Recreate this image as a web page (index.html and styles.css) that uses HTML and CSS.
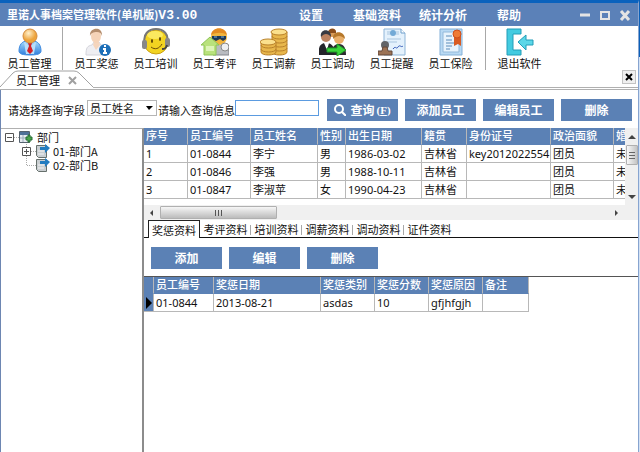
FILE: index.html
```html
<!DOCTYPE html>
<html lang="zh-CN">
<head>
<meta charset="utf-8">
<title>里诺人事档案管理软件</title>
<link rel="stylesheet" href="styles.css">
</head>
<body>
<div class="window">
  <header class="titlebar">
    <h1 class="title">里诺人事档案管理软件(单机版)<span class="version">V3.00</span></h1>
    <nav class="menu">
      <a href="#">设置</a>
      <a href="#">基础资料</a>
      <a href="#">统计分析</a>
      <a href="#">帮助</a>
    </nav>
    <div class="window-controls">
      <button type="button" aria-label="最小化"><svg width="12" height="12" viewBox="0 0 12 12"><path d="M1 6h10" stroke="#e4e4e4" stroke-width="3"/></svg></button>
      <button type="button" aria-label="最大化"><svg width="12" height="12" viewBox="0 0 12 12"><path d="M2 3h8v7H2z" fill="none" stroke="#e4e4e4" stroke-width="2"/></svg></button>
      <button type="button" aria-label="关闭"><svg width="12" height="12" viewBox="0 0 12 12"><path d="M2 2l8 9M10 2l-8 9" stroke="#e4e4e4" stroke-width="3"/></svg></button>
    </div>
  </header>

  <div class="toolbar">
    <button type="button" class="tool">
      <svg width="28" height="28" viewBox="0 0 28 28">
        <defs>
          <radialGradient id="head" cx=".4" cy=".3"><stop offset="0" stop-color="#fff0cc"/><stop offset="1" stop-color="#eda43c"/></radialGradient>
          <linearGradient id="suit" x2="0" y2="1"><stop offset="0" stop-color="#a5dbfd"/><stop offset="1" stop-color="#2f7ddb"/></linearGradient>
        </defs>
        <path d="M3 23c0-6 3-10 8-10h6c5 0 8 4 8 10 0 3-4 4-11 4S3 26 3 23z" fill="url(#suit)" stroke="#3f8be0"/>
        <path d="M8 14l6 4 6-4-2 12h-8z" fill="#b8defa"/>
        <path d="M12 15h4l-1 3 2 5-3 3-3-3 2-5z" fill="#d3202a"/>
        <circle cx="14" cy="8" r="7" fill="url(#head)" stroke="#d48b3d"/>
      </svg>
      <span>员工管理</span>
    </button>
    <i class="divider"></i>
    <button type="button" class="tool">
      <svg width="28" height="28" viewBox="0 0 28 28">
        <path d="M3 27c0-7 1-9 6-10l2-3h5l2 3c4 1 6 3 6 10z" fill="#eeeef2" stroke="#d5d5dc"/>
        <path d="M10 17l3 5 4-5-1-3h-5z" fill="#f5d5bd"/>
        <ellipse cx="13" cy="8" rx="5" ry="7" fill="#f5d3b8"/>
        <path d="M7 8c-1-9 13-10 12 0-1-3-2-4-5-4-4 0-6 1-7 4z" fill="#b58e6e"/>
        <circle cx="22" cy="22" r="6" fill="#1d6fb8"/>
        <path d="M22 17v2M20 21h2v4M20 25h4" stroke="#fff" stroke-width="2" fill="none"/>
      </svg>
      <span>员工奖惩</span>
    </button>
    <button type="button" class="tool">
      <svg width="28" height="28" viewBox="0 0 28 28">
        <circle cx="14" cy="14" r="12" fill="#f2d321" stroke="#c9a013"/>
        <ellipse cx="13" cy="7" rx="8" ry="4" fill="#fbe95f"/>
        <path d="M3 16C0 6 7 1 14 1s14 5 11 15" fill="none" stroke="#777" stroke-width="2"/>
        <rect x="0" y="12" width="5" height="9" rx="2" fill="#888"/>
        <rect x="23" y="10" width="5" height="9" rx="2" fill="#888"/>
        <ellipse cx="10" cy="13" rx="1" ry="2" fill="#5b4307"/><ellipse cx="18" cy="11" rx="1" ry="2" fill="#5b4307"/>
        <path d="M9 19c4 3 8 2 11-3" fill="none" stroke="#6b4b08" stroke-width="1"/>
        <path d="M25 17c-1 4-3 4-5 4" fill="none" stroke="#444" stroke-width="2"/>
      </svg>
      <span>员工培训</span>
    </button>
    <button type="button" class="tool">
      <svg width="28" height="28" viewBox="0 0 28 28">
        <path d="M12 27c0-8 2-12 8-12s8 4 8 12z" fill="#b9bcc1" stroke="#85888e"/>
        <circle cx="18" cy="9" r="8" fill="#f2b53d"/>
        <path d="M10 7c1-9 15-9 16 0-4-3-11-3-16 0z" fill="#e58b21"/>
        <path d="M11 8h14v3l-3 2-3-2-4 2-4-2z" fill="#1d3858"/>
        <path d="M13 9h3M20 9h3" stroke="#7fb1d9"/>
        <circle cx="24" cy="19" r="4" fill="#eef0f2" stroke="#888"/>
        <path d="M0 17l9-8 9 8h-3v10H3V17z" fill="#b9e27c" stroke="#8fc457"/>
        <path d="M5 18h8v5H5z" fill="#ddf4b7"/>
      </svg>
      <span>员工考评</span>
    </button>
    <button type="button" class="tool">
      <svg width="28" height="28" viewBox="0 0 28 28">
        <g fill="#e8b74c" stroke="#b9812a">
          <path d="M12 4v20c0 4 15 4 15 0V4z"/>
          <path d="M12 20c0 4 15 4 15 0M12 16c0 4 15 4 15 0M12 12c0 4 15 4 15 0M12 8c0 4 15 4 15 0" fill="none"/>
          <ellipse cx="19" cy="4" rx="8" ry="3" fill="#fbe08d"/>
          <path d="M1 14v10c0 4 15 4 15 0V14z"/>
          <path d="M1 21c0 4 15 4 15 0M1 17c0 4 15 4 15 0" fill="none"/>
          <ellipse cx="8" cy="14" rx="8" ry="3" fill="#fbe08d"/>
        </g>
      </svg>
      <span>员工调薪</span>
    </button>
    <button type="button" class="tool">
      <svg width="28" height="28" viewBox="0 0 28 28">
        <circle cx="13" cy="5" r="4" fill="#d99a56"/><path d="M9 5c0-6 9-6 8 0z" fill="#8a4d1c"/>
        <circle cx="20" cy="11" r="5" fill="#e9af69"/><path d="M14 11c-1-9 12-9 12 0-4-4-8-4-12 0z" fill="#b6782b"/>
        <path d="M12 27c0-7 3-11 8-11s7 4 7 11z" fill="#2b2b31"/>
        <circle cx="7" cy="9" r="5" fill="#bc8260"/><path d="M2 9c-2-9 11-9 10 0-3-4-7-4-10 0z" fill="#383a42"/>
        <path d="M0 27c-1-8 1-12 7-12s9 4 8 12z" fill="#24242a"/>
        <path d="M5 15l3 7 2-7z" fill="#fff"/>
        <path d="M8 20h10v-4l9 6-9 6v-4H8z" fill="#3bd33b" stroke="#1d9b27"/>
      </svg>
      <span>员工调动</span>
    </button>
    <button type="button" class="tool">
      <svg width="28" height="28" viewBox="0 0 28 28">
        <path d="M6 1h17l4 4v22H6z" fill="#e4f1fc" stroke="#8fb5d8"/>
        <path d="M23 1v4h4" fill="#fff" stroke="#6f9fcb"/>
        <path d="M9 4h3M9 6h3M18 4h3M18 6h3M9 11h14M9 14h10" stroke="#a8c5df"/>
        <circle cx="15" cy="5" r="3" fill="#72a9d6"/>
        <path d="M15 21c3-4 3 1 5-2s3 1 5-1" fill="none" stroke="#3258b7"/>
        <circle cx="7" cy="17" r="4" fill="#626468"/>
        <path d="M5 19h4l1 4h4v4H0v-4h4z" fill="#9c7355" stroke="#63483a"/>
      </svg>
      <span>员工提醒</span>
    </button>
    <button type="button" class="tool">
      <svg width="28" height="28" viewBox="0 0 28 28">
        <path d="M3 1h22v26H3z" fill="#b8d9f3" stroke="#85b1d8"/>
        <path d="M6 4h16v20H6z" fill="#e7f3fc" stroke="#93b9da"/>
        <path d="M9 8h6M9 12h6M9 15h9M9 18h6M9 21h4" stroke="#5b8cba"/>
        <path d="M17 8h7v10l-3-2-4 2z" fill="#d85b22"/>
        <circle cx="20" cy="6" r="4" fill="#ef7b35" stroke="#ce4f1b"/>
      </svg>
      <span>员工保险</span>
    </button>
    <i class="divider wide"></i>
    <button type="button" class="tool">
      <svg width="28" height="28" viewBox="0 0 28 28">
        <path d="M1 1h14v5H7v16h8v5H1z" fill="#43cbe0" stroke="#239db8"/>
        <path d="M12 14l8-7v5h7v5h-7v5z" fill="#5bd7e8" stroke="#239db8"/>
      </svg>
      <span>退出软件</span>
    </button>
  </div>

  <div class="page-tabs">
    <div class="page-tab">
      <svg class="tab-shape" width="94" height="18" viewBox="0 0 94 18" aria-hidden="true"><path d="M0 17L13 3Q15 1 18 1H74Q77 1 79 3L93 17V18H0z" fill="#fff"/><path d="M0 17L13 3Q15 1 18 1H74Q77 1 79 3L93 17" fill="none" stroke="#a2a2a2"/></svg>
      <span>员工管理</span>
      <button type="button" class="tab-close" aria-label="关闭标签"><svg width="9" height="9" viewBox="0 0 9 9"><path d="M1 1l7 7M8 1l-7 7" stroke="#a0a0a0" stroke-width="2"/></svg></button>
    </div>
    <button type="button" class="page-close" aria-label="关闭页面"><svg width="8" height="8" viewBox="0 0 8 8"><path d="M1 1l6 6M7 1l-6 6" stroke="#000" stroke-width="2"/></svg></button>
  </div>

  <main class="page">
    <form class="search">
      <label for="field">请选择查询字段</label>
      <span class="select-box">
        <select id="field"><option>员工姓名</option></select>
        <svg width="8" height="5" viewBox="0 0 8 5" aria-hidden="true"><path d="M1 0h7L4 4z" fill="#000"/></svg>
      </span>
      <label for="query">请输入查询信息</label>
      <input id="query" type="text">
      <div class="actions">
        <button type="button" class="btn"><svg width="12" height="12" viewBox="0 0 12 12"><circle cx="5" cy="5" r="4" fill="none" stroke="#fff" stroke-width="2"/><path d="M8 8l4 4" stroke="#fff" stroke-width="2"/></svg>查询<span class="hotkey">(<u>F</u>)</span></button>
        <button type="button" class="btn">添加员工</button>
        <button type="button" class="btn">编辑员工</button>
        <button type="button" class="btn">删除</button>
      </div>
    </form>

    <div class="split">
      <aside class="tree">
        <div class="node">
          <svg width="28" height="14" viewBox="0 0 28 14"><path d="M9 7.500h5" stroke="#aaa" stroke-dasharray="1 1"/><path d="M.5 3.500h8v8h-8zM2 7.500h5" fill="#fff" stroke="#555"/><path d="M14.500 1.500h10v11h-10z" fill="#e5eaf0" stroke="#55626e"/><path d="M15 2h9v3h-9z" fill="#4f7198"/><path d="M15 8h9M18 5v7" stroke="#9aabba"/><path d="M21 7h2V5h2v2h2v3h-2v2h-2v-2h-2z" fill="#4aa44a" stroke="#246c32"/></svg>
          <span>部门</span>
        </div>
        <div class="node child">
          <svg width="28" height="14" viewBox="0 0 28 14"><path d="M9 7.500h5M4.500 0v3M4.500 12v2" stroke="#aaa" stroke-dasharray="1 1"/><path d="M.5 3.500h8v8h-8zM2 7.500h5M4.500 5v5" fill="#fff" stroke="#555"/><path d="M14.500 1.500h10v12h-8l-2-2z" fill="#c9ced1" stroke="#66706c"/><path d="M16 7h6M16 10h6" stroke="#f5f5f5"/><path d="M18 3h5V0l5 4-5 5V6h-5z" fill="#237cc0"/></svg>
          <span>01-部门A</span>
        </div>
        <div class="node child">
          <svg width="28" height="14" viewBox="0 0 28 14"><path d="M4.500 0v7.500H14" fill="none" stroke="#aaa" stroke-dasharray="1 1"/><path d="M14.500 1.500h10v12h-8l-2-2z" fill="#c9ced1" stroke="#66706c"/><path d="M16 7h6M16 10h6" stroke="#f5f5f5"/><path d="M18 3h5V0l5 4-5 5V6h-5z" fill="#237cc0"/></svg>
          <span>02-部门B</span>
        </div>
      </aside>

      <section class="content">
        <div class="staff">
          <div class="staff-view">
            <table class="grid staff-grid">
              <colgroup><col class="w44"><col class="w63"><col class="w67"><col class="w28"><col class="w76"><col class="w45"><col class="w84"><col class="w63"><col class="w28"></colgroup>
              <thead><tr><th>序号</th><th>员工编号</th><th>员工姓名</th><th>性别</th><th>出生日期</th><th>籍贯</th><th>身份证号</th><th>政治面貌</th><th>婚</th></tr></thead>
              <tbody>
                <tr><td>1</td><td>01-0844</td><td>李宁</td><td>男</td><td>1986-03-02</td><td>吉林省</td><td>key2012022554</td><td>团员</td><td>未</td></tr>
                <tr><td>2</td><td>01-0846</td><td>李强</td><td>男</td><td>1988-10-11</td><td>吉林省</td><td></td><td>团员</td><td>未</td></tr>
                <tr><td>3</td><td>01-0847</td><td>李淑苹</td><td>女</td><td>1990-04-23</td><td>吉林省</td><td></td><td>团员</td><td>未</td></tr>
              </tbody>
            </table>
          </div>
          <div class="vbar">
            <svg width="8" height="5" viewBox="0 0 8 5"><path d="M0 5l4-4 4 4z" fill="#444"/></svg>
            <div class="vthumb"><svg width="6" height="7" viewBox="0 0 6 7"><path d="M0 .5h6M0 3.500h6M0 6.500h6" stroke="#666"/></svg></div>
            <svg class="down" width="8" height="5" viewBox="0 0 8 5"><path d="M0 0l4 4 4-4z" fill="#444"/></svg>
          </div>
          <div class="hbar">
            <svg width="5" height="8" viewBox="0 0 5 8"><path d="M4 1v6L1 4z" fill="#444"/></svg>
            <div class="hthumb"><svg width="7" height="6" viewBox="0 0 7 6"><path d="M.5 0v6M3.500 0v6M6.500 0v6" stroke="#555"/></svg></div>
            <svg class="right" width="5" height="8" viewBox="0 0 5 8"><path d="M1 1v6l3-3z" fill="#444"/></svg>
          </div>
        </div>

        <div class="tabs" role="tablist">
          <button type="button" role="tab" class="tab active" aria-selected="true">奖惩资料</button>
          <button type="button" role="tab" class="tab">考评资料</button>
          <button type="button" role="tab" class="tab">培训资料</button>
          <button type="button" role="tab" class="tab">调薪资料</button>
          <button type="button" role="tab" class="tab">调动资料</button>
          <button type="button" role="tab" class="tab last">证件资料</button>
        </div>

        <div class="record-actions">
          <button type="button" class="btn">添加</button>
          <button type="button" class="btn">编辑</button>
          <button type="button" class="btn">删除</button>
        </div>

        <div class="records">
          <table class="grid record-grid">
            <colgroup><col class="w10"><col class="w60"><col class="w107"><col class="w54"><col class="w54"><col class="w54"><col class="w46"></colgroup>
            <thead><tr><th></th><th>员工编号</th><th>奖惩日期</th><th>奖惩类别</th><th>奖惩分数</th><th>奖惩原因</th><th>备注</th></tr></thead>
            <tbody><tr><td class="marker"><svg width="6" height="12" viewBox="0 0 6 12"><path d="M0 0l6 6-6 6z" fill="#000"/></svg></td><td>01-0844</td><td>2013-08-21</td><td>asdas</td><td>10</td><td>gfjhfgjh</td><td></td></tr></tbody>
          </table>
        </div>
      </section>
    </div>
  </main>
</div>
</body>
</html>
```
FILE: styles.css
```css
* { box-sizing: border-box; }

body {
  margin: 0;
  background: linear-gradient(#0a5fb8 57px, #d4e2f4 57px);
  color: #111;
  font: 11px/14px "Noto Sans CJK SC", sans-serif;
}

button, input, select { font: inherit; color: inherit; }
button { margin: 0; padding: 0; border: 0; background: none; }
svg { display: block; flex: none; }

.window {
  display: flex;
  flex-direction: column;
  min-height: 100vh;
  margin-right: 1px;
  border-top: 3px solid #0a62bd;
  border-right: 1px solid #87a4d0;
}

/* Title bar */
.titlebar {
  display: flex;
  align-items: center;
  height: 23px;
  background: #5b81b8;
  color: #fff;
  font-weight: bold;
}
.title {
  flex: none;
  width: 278px;
  margin: 0;
  padding-left: 7px;
  font-size: 11px;
  line-height: 14px;
}
.version { font-family: "Liberation Mono", monospace; font-size: 13px; }
.menu { display: flex; font-size: 12px; }
.menu a {
  width: 66px;
  color: #fff;
  text-align: center;
  text-decoration: none;
}
.window-controls {
  display: flex;
  gap: 8px;
  margin-left: auto;
  padding-right: 7px;
}

/* Toolbar */
.toolbar {
  display: flex;
  height: 44px;
  padding-top: 1px;
  background: #fff;
}
.tool {
  display: flex;
  flex: none;
  flex-direction: column;
  align-items: center;
  width: 59px;
  padding-top: 1px;
}
.divider {
  width: 1px;
  margin: 0 4px 0 3px;
  background: #a8a8a8;
}
.divider.wide { margin: 0 4px 0 5px; }

/* Page tab strip */
.page-tabs {
  display: flex;
  justify-content: space-between;
  height: 20px;
  border-bottom: 3px double #b0b0b0;
  background: #fff;
}
.page-tab {
  position: relative;
  display: flex;
  align-items: center;
  gap: 8px;
  height: 18px;
  padding: 2px 16px 0;
}
.tab-shape { position: absolute; left: 0; top: 0; }
.page-tab span, .tab-close { position: relative; }
.page-close {
  display: grid;
  place-items: center;
  width: 14px;
  height: 14px;
  margin-right: 2px;
  border: 1px solid #c4c4c4;
  background: #f0f0f0;
}

/* Page */
.page {
  display: flex;
  flex: 1;
  flex-direction: column;
  border-left: 1px solid #6d86b2;
  background: #fff;
}
.search {
  display: flex;
  align-items: center;
  height: 38px;
  padding: 2px 6px 0 7px;
}
.search label { flex: none; }
.select-box {
  position: relative;
  width: 70px;
  margin: 0 1px 4px 2px;
}
.select-box select {
  display: block;
  width: 100%;
  height: 16px;
  padding: 0 2px;
  border: 1px solid #b5b5b5;
  border-radius: 0;
  background: #fff;
  appearance: none;
}
.select-box svg { position: absolute; right: 4px; top: 6px; }
.search input {
  width: 84px;
  height: 16px;
  padding: 0 2px;
  border: 1px solid #5b9be0;
  background: #fff;
  margin-bottom: 4px;
}
.actions { display: flex; gap: 7px; margin-left: auto; }
.btn {
  display: flex;
  align-items: center;
  justify-content: center;
  width: 71px;
  height: 22px;
  background: #5b81b5;
  color: #fff;
  font-size: 12px;
  font-weight: bold;
}
.btn svg { margin-right: 4px; }
.hotkey { font: bold 11px/14px "Liberation Serif", serif; margin-left: 2px; }

.split { display: flex; flex: 1; }

/* Department tree */
.tree {
  flex: none;
  width: 143px;
  padding: 1px 4px;
  border-top: 1px solid #b0b0b0;
  border-right: 2px solid #8c8c8c;
}
.node { display: flex; gap: 4px; height: 14px; }
.child { padding-left: 17px; gap: 3px; }

/* Content */
.content { flex: 1; min-width: 0; }

.staff {
  display: grid;
  grid-template: 77px 15px / minmax(0, 1fr) 13px;
}
.staff-view { overflow: hidden; }

.grid {
  border-collapse: separate;
  border-spacing: 0;
  table-layout: fixed;
  font-family: "Noto Sans", "Noto Sans CJK SC", sans-serif;
  line-height: 14px;
}
.staff-grid { width: 498px; }
.record-grid { width: 385px; }
.grid th, .grid td {
  padding: 0 0 0 2px;
  border-right: 1px solid #b8b8b8;
  border-bottom: 1px solid #b8b8b8;
  text-align: left;
  white-space: nowrap;
}
.grid th {
  height: 17px;
  border-bottom-color: #5b81b5;
  background: #5b81b5;
  color: #fff;
  font-weight: 500;
}
.grid td { height: 18px; }
.grid .marker { padding: 0 0 0 2px; background: #5b81b5; }
.w10 { width: 10px; }
.w28 { width: 28px; }
.w44 { width: 44px; }
.w45 { width: 45px; }
.w46 { width: 46px; }
.w54 { width: 54px; }
.w60 { width: 60px; }
.w63 { width: 63px; }
.w67 { width: 67px; }
.w76 { width: 76px; }
.w84 { width: 84px; }
.w107 { width: 107px; }

.vbar {
  display: flex;
  grid-row: span 2;
  flex-direction: column;
  align-items: center;
  padding: 6px 0 20px;
  background: #f0f0f0;
}
.vthumb, .hthumb {
  display: grid;
  place-items: center;
  border: 1px solid #b0b0b0;
  border-radius: 1px;
}
.vthumb {
  width: 12px;
  height: 20px;
  margin-top: 6px;
  background: linear-gradient(90deg, #f8f8f8, #c4c4c4);
}
.down { margin-top: auto; }
.hbar {
  display: flex;
  align-items: center;
  padding: 0 6px 0 5px;
  background: #f0f0f0;
}
.hthumb {
  width: 117px;
  height: 13px;
  margin-left: 6px;
  background: linear-gradient(#f6f6f6, #bcbcbc);
}
.right { margin-left: auto; }

/* Record tabs */
.tabs {
  display: flex;
  height: 18px;
  padding-left: 4px;
  background: linear-gradient(#111, #111) bottom / 100% 1px no-repeat;
}
.tab {
  position: relative;
  width: 51px;
  height: 17px;
  padding-top: 1px;
}
.tab::after {
  content: "";
  position: absolute;
  right: 0;
  top: 5px;
  height: 10px;
  border-right: 1px solid #a8a8a8;
}
.tab.active {
  width: 52px;
  height: 18px;
  padding-top: 0;
  border: 1px solid #222;
  border-bottom: 0;
  background: #fff;
}
.tab.active::after, .tab.last::after { content: none; }

.record-actions {
  display: flex;
  gap: 7px;
  padding: 9px 7px 7px;
}
.records { border-top: 1px solid #555; }
```
